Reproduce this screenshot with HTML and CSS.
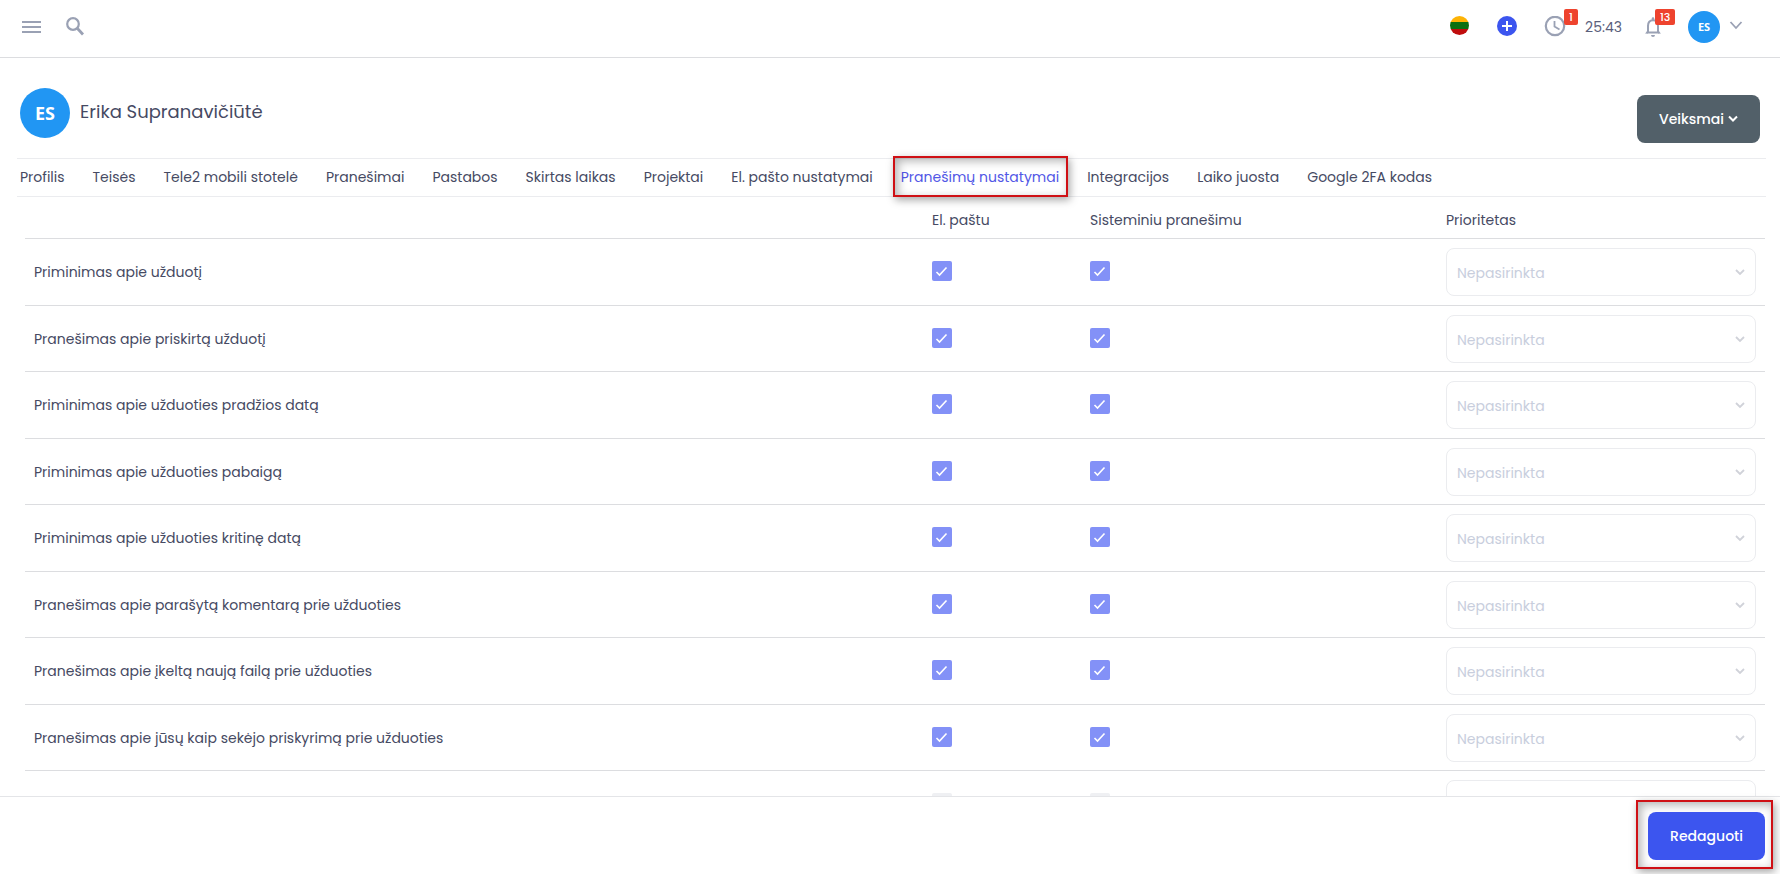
FILE: index.html
```html
<!DOCTYPE html>
<html lang="lt">
<head>
    <meta charset="utf-8">
    <meta name="viewport" content="width=device-width, initial-scale=1">
    <title>Pranešimų nustatymai</title>
    <link rel="stylesheet" href="styles.css">
</head>
<body>
    <header class="topbar">
        <button class="icon-btn" type="button" aria-label="Meniu">
            <svg width="22" height="22" viewBox="0 0 22 22"><path d="M2 6h19M2 11h19M2 16h19" stroke="#9aa1b4" stroke-width="2"/></svg>
        </button>
        <button class="icon-btn" type="button" aria-label="Paieška">
            <svg width="22" height="22" viewBox="0 0 22 22" fill="none" stroke="#9aa1b4"><circle cx="9" cy="8" r="5.8" stroke-width="2.2"/><path d="M13 12l6 6.500" stroke-width="2.8"/></svg>
        </button>
        <div class="topbar-right">
            <button class="icon-btn flag-btn" type="button" aria-label="Kalba">
                <span class="flag"></span>
            </button>
            <button class="icon-btn add-btn" type="button" aria-label="Pridėti">
                <svg width="20" height="20" viewBox="0 0 20 20"><circle cx="10" cy="10" r="10" fill="#3c55ef"/><path d="M10 5v10M5 10h10" stroke="#fff" stroke-width="2"/></svg>
            </button>
            <button class="icon-btn clock-btn" type="button" aria-label="Laikas">
                <svg width="22" height="22" viewBox="0 0 22 22" fill="none" stroke="#9aa1b4"><circle cx="11" cy="10" r="9.200" stroke-width="2.2"/><path d="M10.500 5v5.500l5 3" stroke-width="1.800"/></svg>
                <span class="badge">1</span>
            </button>
            <span class="time">25:43</span>
            <button class="icon-btn bell-btn" type="button" aria-label="Pranešimai">
                <svg width="18" height="22" viewBox="0 0 18 22"><path d="M2.500 16.500h13M4 16.500V10c0-3.500 2-5.800 5-5.800s5 2.300 5 5.800v6.500" fill="none" stroke="#9aa1b4" stroke-width="2"/><path d="M1 17.500l3-3v3zM17 17.500l-3-3v3zM7.700 2.500a1.300 1.300 0 0 1 2.600 0v2H7.700zM7 19h4a2 2 0 0 1-4 0z" fill="#9aa1b4"/></svg>
                <span class="badge">13</span>
            </button>
            <button class="icon-btn user-btn" type="button" aria-label="ES">
                <span class="avatar avatar-sm">ES</span>
                <svg width="14" height="10" viewBox="0 0 14 10"><path d="M1.500 1L7 7l5.500-6" fill="none" stroke="#9aa1b4" stroke-width="1.800"/></svg>
            </button>
        </div>
    </header>

    <main class="content">
        <div class="profile">
            <span class="avatar avatar-lg">ES</span>
            <h1>Erika Supranavičiūtė</h1>
            <button class="btn btn-dark" type="button">Veiksmai
                <svg width="10" height="8" viewBox="0 0 10 8"><path d="M1 1.500l4 4 4-4" fill="none" stroke="#fff" stroke-width="2"/></svg>
            </button>
        </div>

        <nav class="tabs">
            <a href="#">Profilis</a>
            <a href="#">Teisės</a>
            <a href="#">Tele2 mobili stotelė</a>
            <a href="#">Pranešimai</a>
            <a href="#">Pastabos</a>
            <a href="#">Skirtas laikas</a>
            <a href="#">Projektai</a>
            <a href="#">El. pašto nustatymai</a>
            <a href="#" class="active">Pranešimų nustatymai</a>
            <a href="#">Integracijos</a>
            <a href="#">Laiko juosta</a>
            <a href="#">Google 2FA kodas</a>
        </nav>

        <table class="settings">
            <thead>
                <tr>
                    <td></td>
                    <th class="col-mail" id="mail" scope="col">El. paštu</th>
                    <th class="col-system" id="system" scope="col">Sisteminiu pranešimu</th>
                    <th class="col-priority" id="priority" scope="col">Prioritetas</th>
                </tr>
            </thead>
            <tbody>
                <tr>
                    <td id="r1">Priminimas apie užduotį</td>
                    <td><input type="checkbox" aria-labelledby="r1 mail" checked disabled></td>
                    <td><input type="checkbox" aria-labelledby="r1 system" checked disabled></td>
                    <td><select aria-labelledby="r1 priority" disabled><option>Nepasirinkta</option></select></td>
                </tr>
                <tr>
                    <td id="r2">Pranešimas apie priskirtą užduotį</td>
                    <td><input type="checkbox" aria-labelledby="r2 mail" checked disabled></td>
                    <td><input type="checkbox" aria-labelledby="r2 system" checked disabled></td>
                    <td><select aria-labelledby="r2 priority" disabled><option>Nepasirinkta</option></select></td>
                </tr>
                <tr>
                    <td id="r3">Priminimas apie užduoties pradžios datą</td>
                    <td><input type="checkbox" aria-labelledby="r3 mail" checked disabled></td>
                    <td><input type="checkbox" aria-labelledby="r3 system" checked disabled></td>
                    <td><select aria-labelledby="r3 priority" disabled><option>Nepasirinkta</option></select></td>
                </tr>
                <tr>
                    <td id="r4">Priminimas apie užduoties pabaigą</td>
                    <td><input type="checkbox" aria-labelledby="r4 mail" checked disabled></td>
                    <td><input type="checkbox" aria-labelledby="r4 system" checked disabled></td>
                    <td><select aria-labelledby="r4 priority" disabled><option>Nepasirinkta</option></select></td>
                </tr>
                <tr>
                    <td id="r5">Priminimas apie užduoties kritinę datą</td>
                    <td><input type="checkbox" aria-labelledby="r5 mail" checked disabled></td>
                    <td><input type="checkbox" aria-labelledby="r5 system" checked disabled></td>
                    <td><select aria-labelledby="r5 priority" disabled><option>Nepasirinkta</option></select></td>
                </tr>
                <tr>
                    <td id="r6">Pranešimas apie parašytą komentarą prie užduoties</td>
                    <td><input type="checkbox" aria-labelledby="r6 mail" checked disabled></td>
                    <td><input type="checkbox" aria-labelledby="r6 system" checked disabled></td>
                    <td><select aria-labelledby="r6 priority" disabled><option>Nepasirinkta</option></select></td>
                </tr>
                <tr>
                    <td id="r7">Pranešimas apie įkeltą naują failą prie užduoties</td>
                    <td><input type="checkbox" aria-labelledby="r7 mail" checked disabled></td>
                    <td><input type="checkbox" aria-labelledby="r7 system" checked disabled></td>
                    <td><select aria-labelledby="r7 priority" disabled><option>Nepasirinkta</option></select></td>
                </tr>
                <tr>
                    <td id="r8">Pranešimas apie jūsų kaip sekėjo priskyrimą prie užduoties</td>
                    <td><input type="checkbox" aria-labelledby="r8 mail" checked disabled></td>
                    <td><input type="checkbox" aria-labelledby="r8 system" checked disabled></td>
                    <td><select aria-labelledby="r8 priority" disabled><option>Nepasirinkta</option></select></td>
                </tr>
                <tr>
                    <td></td>
                    <td><input type="checkbox" aria-labelledby="mail" disabled></td>
                    <td><input type="checkbox" aria-labelledby="system" disabled></td>
                    <td><select aria-labelledby="priority" disabled><option></option></select></td>
                </tr>
            </tbody>
        </table>
    </main>

    <footer class="actions">
        <div class="marked">
            <button class="btn btn-primary" type="button">Redaguoti</button>
        </div>
    </footer>
</body>
</html>
```

FILE: styles.css
```css
*{box-sizing:border-box; margin:0; padding:0;}
body{display:flex; flex-direction:column; height:100vh; overflow:hidden; background:#fff; color:#464a63; font-family:Poppins, Inter, sans-serif; font-size:14px; line-height:20px;}
button, select{font:inherit;}
button{border:0; cursor:pointer;}
svg{display:block;}

/* top bar */
.topbar{display:flex; flex:none; align-items:center; gap:22px; height:58px; padding:0 37px 4px 20px; border-bottom:1px solid #dcdde0;}
.icon-btn{display:flex; position:relative; align-items:center; background:none;}
.topbar-right{display:flex; align-items:center; margin-left:auto;}
.flag-btn{margin-right:28px;}
.flag{width:19px; height:19px; margin-bottom:2px; border-radius:50%; background:linear-gradient(#fdb305 33%, #0a7010 33%, #0a7010 66%, #c00d0d 66%);}
.add-btn{margin-right:27px;}
.add-btn svg{margin-bottom:2px;}
.clock-btn{margin-right:19px;}
.time{color:#5b5f7c; margin-right:22px;}
.bell-btn{margin-right:26px;}
.user-btn{gap:9px;}
.user-btn svg{margin-bottom:2px;}
.badge{position:absolute; left:20px; top:-7px; height:16px; padding:0 5px; border-radius:2px; background:#ee432e; color:#fff; font-size:11px; line-height:16px; font-weight:500;}
.bell-btn .badge{left:11px;}
.avatar{display:flex; flex:none; align-items:center; justify-content:center; border-radius:50%; background:#2196f3; color:#fff; font-family:"Open Sans", sans-serif; font-weight:700;}
.avatar-sm{width:32px; height:32px; font-size:11px;}
.avatar-lg{width:50px; height:50px; font-size:18px;}

/* page */
.content{flex:1; min-height:0; overflow:hidden; padding:30px 14px 0 17px;}
.profile{display:flex; align-items:flex-start; gap:10px; padding:0 6px 15px 3px;}
.profile h1{font-size:18px; font-weight:400; line-height:48px;}
.profile .btn{margin:7px 0 0 auto;}
.btn{display:flex; align-items:center; justify-content:center; gap:4px; height:48px; padding:0 22px; border-radius:8px; color:#fff; font-weight:500;}
.btn-dark{background:#526069;}
.btn-primary{background:#3c55ef;}

.tabs{display:flex; gap:28px; padding:0 3px; border-top:1px solid #ebecef; border-bottom:1px solid #ebecef; white-space:nowrap;}
.tabs a{color:#464a63; line-height:37px; text-decoration:none;}
.tabs .active{color:#5257e6; position:relative;}
.tabs .active:after, .marked{border:2px solid #cf1015; box-shadow:2px 3px 8px rgba(0,0,0,.35), inset 3px 3px 10px rgba(0,0,0,.3);}
.tabs .active:after{content:""; position:absolute; left:-8px; right:-9px; top:-3px; bottom:-1px;}

/* settings table */
.settings{width:calc(100% - 9px); margin-left:8px; border-collapse:separate; border-spacing:0; table-layout:fixed;}
.settings th, .settings td{padding:9px; border-bottom:1px solid #dcdde0; text-align:left; font-weight:400; vertical-align:middle;}
.settings thead th, .settings thead td{height:42px; padding:13px 9px 8px;}
.settings tbody tr:nth-child(even) td{padding-bottom:8px;}
.col-mail{width:158px;}
.col-system{width:356px;}
.col-priority{width:328px;}
.settings input{display:block; appearance:none; width:20px; height:20px; margin-bottom:2px; border-radius:2px; background:#eff0f3;}
.settings input:checked{background:#8391f7 url("data:image/svg+xml,%3Csvg xmlns='http://www.w3.org/2000/svg' viewBox='0 0 20 20'%3E%3Cpath d='M4.500 11l3 3 7-7.500' fill='none' stroke='%23fff' stroke-width='1.600'/%3E%3C/svg%3E");}
.settings select{display:block; appearance:none; width:100%; height:48px; padding:2px 10px 0; border:1px solid #ebecef; border-radius:8px; opacity:1; color:#c8cedd; background:#fff url("data:image/svg+xml,%3Csvg xmlns='http://www.w3.org/2000/svg' width='10' height='8' viewBox='0 0 10 8'%3E%3Cpath d='M1 2l4 4 4-4' fill='none' stroke='%23d0d2d9' stroke-width='1.800'/%3E%3C/svg%3E") no-repeat right 10px center;}

/* bottom bar */
.actions{display:flex; flex:none; justify-content:flex-end; padding:3px 7px 5px; border-top:1px solid #e4e5e8;}
.marked{padding:10px 6px 7px 10px;}
```
